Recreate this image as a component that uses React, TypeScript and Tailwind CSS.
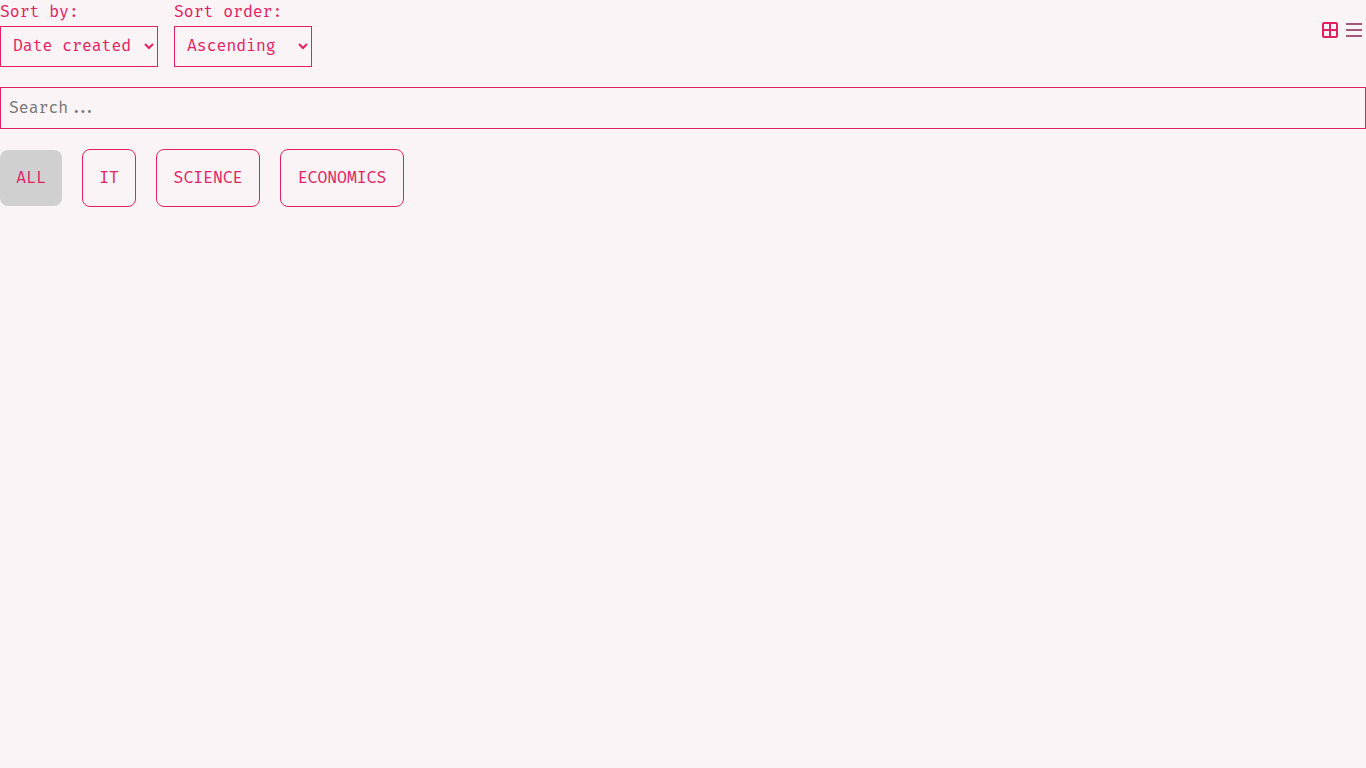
import { useState } from "react";

const categories = [
  { name: "ALL", width: "min-w-[62px]" },
  { name: "IT", width: "min-w-[54px]" },
  { name: "SCIENCE", width: "min-w-[104px]" },
  { name: "ECONOMICS", width: "min-w-[124px]" },
];

const selectClass = "h-[41px] border border-[#e12262] bg-transparent px-2 pb-0.5 outline-none";

export default function App() {
  const [active, setActive] = useState("ALL");
  const [view, setView] = useState("grid");

  return (
    <div className="min-h-screen bg-[#faf4f6] font-['Fira_Code','Fira_Mono','DejaVu_Sans_Mono',monospace] text-base text-[#e12262]">
      <header className="flex items-start justify-between">
        <div className="flex gap-4">
          <div className="flex flex-col gap-0.5">
            <label htmlFor="sort-by">Sort by:</label>
            <select id="sort-by" className={`${selectClass} min-w-[158px]`}>
              <option>Date created</option>
              <option>Title</option>
            </select>
          </div>
          <div className="flex flex-col gap-0.5">
            <label htmlFor="sort-order">Sort order:</label>
            <select id="sort-order" className={`${selectClass} min-w-[138px]`}>
              <option>Ascending</option>
              <option>Descending</option>
            </select>
          </div>
        </div>
        <div className="flex pt-[18px]">
          <button
            type="button"
            aria-label="Grid view"
            aria-pressed={view === "grid"}
            onClick={() => setView("grid")}
            className={view === "grid" ? "text-[#e12262]" : "text-[#a3577a]"}
          >
            <svg className="size-6" viewBox="0 0 24 24" fill="none" stroke="currentColor" strokeWidth="2">
              <rect x="5" y="5" width="14" height="14" rx="1" />
              <path d="M12 5v14M5 12h14" />
            </svg>
          </button>
          <button
            type="button"
            aria-label="List view"
            aria-pressed={view === "list"}
            onClick={() => setView("list")}
            className={view === "list" ? "text-[#e12262]" : "text-[#a3577a]"}
          >
            <svg className="size-6" viewBox="0 0 24 24" fill="none" stroke="currentColor" strokeWidth="2">
              <path d="M4 6h16M4 12h16M4 18h16" />
            </svg>
          </button>
        </div>
      </header>
      <input
        type="text"
        aria-label="Search"
        placeholder="Search..."
        className="mt-5 block h-[42px] w-full border border-[#e12262] bg-transparent px-2 outline-none placeholder:text-[#757575]"
      />
      <nav className="mt-5 flex flex-wrap items-center gap-5">
        {categories.map(({ name, width }) => (
          <button
            key={name}
            type="button"
            onClick={() => setActive(name)}
            className={`${width} rounded-lg p-4 ${
              name === active ? "bg-[#d0d0d0]" : "border border-[#e12262]"
            }`}
          >
            {name}
          </button>
        ))}
      </nav>
    </div>
  );
}
